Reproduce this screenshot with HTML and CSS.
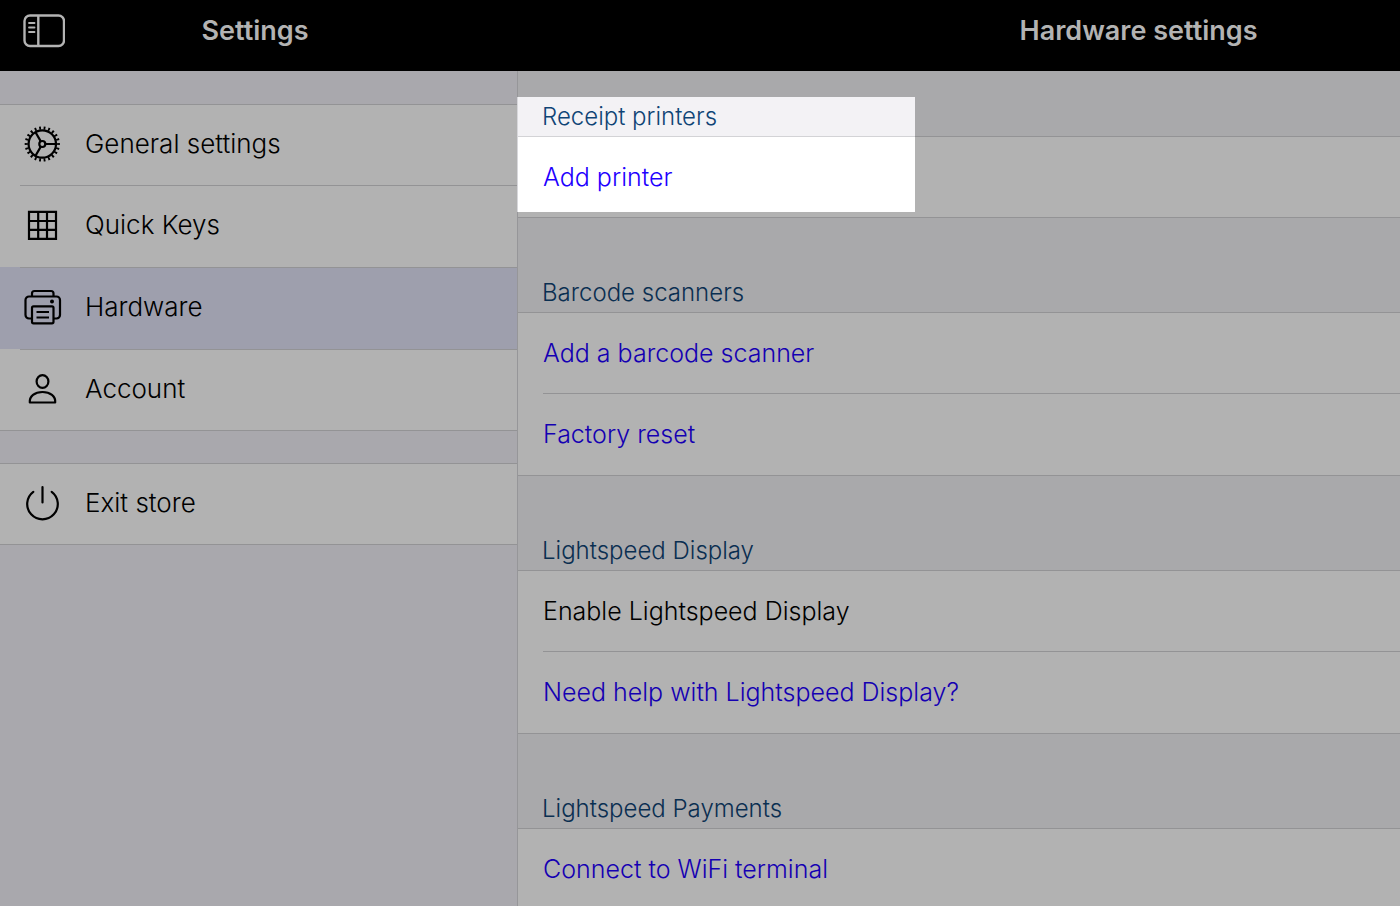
FILE: index.html
```
<!DOCTYPE html>
<html lang="en">
<head>
    <meta charset="utf-8">
    <meta name="viewport" content="width=device-width, initial-scale=1">
    <title>Hardware settings</title>
    <link rel="stylesheet" href="styles.css">
</head>
<body>
    <header class="navbar">
        <div class="navbar-side">
            <button class="toggle" type="button" aria-label="Toggle sidebar">
                <svg width="42" height="34" viewBox="0 0 42 34" fill="none" stroke="#b3b3b3" stroke-width="2.400">
                    <rect x="1.500" y="1.500" width="39.500" height="30.500" rx="5.500"/>
                    <path d="M15.300 1.500v30.500"/>
                    <path d="M6 9h5.500M6 13.500h5.500M6 18h5.500" stroke-width="1.800" stroke-linecap="round"/>
                </svg>
            </button>
            <h1 class="navbar-title">Settings</h1>
        </div>
        <h2 class="navbar-title navbar-main">Hardware settings</h2>
    </header>

    <div class="layout">
        <!-- Sidebar menu -->
        <nav class="sidebar">
            <div class="group">
                <a class="row menu-item" href="#general">
                    <svg class="icon" viewBox="0 0 40 40">
                        <circle cx="20.300" cy="20" r="13.700"/>
                        <circle cx="20.300" cy="20" r="16" stroke-width="3.200" pathLength="66" stroke-dasharray="1.200 1.800" stroke-dashoffset=".600"/>
                        <circle cx="20.300" cy="20" r="3"/>
                        <path d="M23.300 20H34M18.800 17.400L13.500 8.300M18.800 22.600l-5.300 9.100"/>
                    </svg>
                    General settings
                </a>
                <a class="row menu-item" href="#quick-keys">
                    <svg class="icon" viewBox="0 0 40 40">
                        <path d="M7 6.800h27v27h-27zM16.200 6.800v27M25 6.800v27M7 16h27M7 24.800h27"/>
                    </svg>
                    Quick Keys
                </a>
                <a class="row menu-item selected" href="#hardware" aria-current="page">
                    <svg class="icon" viewBox="0 0 40 40">
                        <path d="M10 9.300V6.500a2.500 2.500 0 0 1 2.500-2.500h16.500a2.500 2.500 0 0 1 2.500 2.500v2.800"/>
                        <path d="M9.500 31.500H7a3.500 3.500 0 0 1-3.500-3.500V13A3.500 3.500 0 0 1 7 9.500h27.500A3.500 3.500 0 0 1 38 13v15a3.500 3.500 0 0 1-3.500 3.500H32"/>
                        <rect x="10" y="19.300" width="21.500" height="17" rx="1.500"/>
                        <path d="M14.500 25h12.500M14.500 30.500h12.500" stroke-width="1.800"/>
                        <circle cx="30" cy="14.500" r="2" fill="#000" stroke="none"/>
                    </svg>
                    Hardware
                </a>
                <a class="row menu-item" href="#account">
                    <svg class="icon" viewBox="0 0 40 40">
                        <ellipse cx="20.500" cy="12.500" rx="5.900" ry="6.400"/>
                        <path d="M7.800 33.500c-.600-6.500 5-10.500 12.700-10.500s13.300 4 12.700 10.500z" stroke-linejoin="round"/>
                    </svg>
                    Account
                </a>
            </div>
            <div class="group">
                <a class="row menu-item" href="#exit">
                    <svg class="icon" viewBox="0 0 40 40">
                        <path d="M20.500 4v15.500M11.300 8.800a15.300 15.300 0 1 0 18.400 0" stroke-linecap="round"/>
                    </svg>
                    Exit store
                </a>
            </div>
        </nav>

        <!-- Hardware settings -->
        <main class="content">
            <section>
                <h3 class="section-title">Receipt printers</h3>
                <div class="group">
                    <div class="row"><a href="#add-printer">Add printer</a></div>
                </div>
            </section>
            <section>
                <h3 class="section-title">Barcode scanners</h3>
                <div class="group">
                    <div class="row"><a href="#add-scanner">Add a barcode scanner</a></div>
                    <div class="row"><a href="#factory-reset">Factory reset</a></div>
                </div>
            </section>
            <section>
                <h3 class="section-title">Lightspeed Display</h3>
                <div class="group">
                    <div class="row">Enable Lightspeed Display</div>
                    <div class="row"><a href="#display-help">Need help with Lightspeed Display?</a></div>
                </div>
            </section>
            <section>
                <h3 class="section-title">Lightspeed Payments</h3>
                <div class="group">
                    <div class="row"><a href="#wifi-terminal">Connect to WiFi terminal</a></div>
                </div>
            </section>
            <div class="spotlight"></div>
        </main>
    </div>
</body>
</html>
```
FILE: styles.css
```
* {
    box-sizing: border-box;
}
body {
    margin: 0;
    height: 100vh;
    display: flex;
    flex-direction: column;
    overflow: hidden;
    font-family: Inter, "Liberation Sans", sans-serif;
    font-size: 25px;
    font-weight: 300;
    line-height: 32px;
    color: #000;
}

/* Top bar, stays above the dimming */
.navbar {
    position: relative;
    z-index: 1;
    display: flex;
    flex: none;
    height: 71px;
    padding-bottom: 9px;
    background: #000;
    color: #b3b3b3;
}
.navbar-side {
    display: flex;
    align-items: center;
    width: 517px;
    padding-left: 23px;
}
.navbar-title {
    margin: 0;
    font-size: 27px;
    font-weight: 600;
}
.navbar-side .navbar-title {
    flex: 1;
    padding-right: 72px;
    text-align: center;
}
.navbar-main {
    flex: 1;
    align-self: center;
    padding-left: 360px;
    text-align: center;
    white-space: nowrap;
}
.toggle {
    display: flex;
    padding: 0;
    border: none;
    background: none;
    cursor: pointer;
}

.layout {
    display: flex;
    flex: 1;
    min-height: 0;
}
.sidebar {
    flex: none;
    width: 517px;
    background: #f2f1f8;
}
.sidebar .group {
    margin-top: 32px;
}
.sidebar .group:first-child {
    margin-top: 33px;
}
.content {
    position: relative;
    flex: 1;
    border-left: 1px solid #d7d7db;
    background: #f3f2f5;
}

/* Lists */
.group {
    border-top: 1px solid #d3d3d6;
    border-bottom: 1px solid #d3d3d6;
    background: #fff;
}
.row {
    display: flex;
    align-items: center;
    height: 80px;
    padding-left: 25px;
}
.row + .row {
    height: 82px;
    background-image: linear-gradient(#d3d3d6, #d3d3d6);
    background-repeat: no-repeat;
    background-position: 25px 0;
    background-size: 100% 1px;
}
.row a {
    color: #1e00ff;
    text-decoration: none;
}
.menu-item {
    gap: 23px;
    padding: 0 0 2px 22px;
    color: #000;
    font-size: 26px;
    text-decoration: none;
}
.menu-item + .menu-item {
    background-position: 20px 0;
}
.menu-item + .menu-item:last-child {
    height: 81px;
}
.menu-item.selected {
    background-color: #e3e4f8;
}
.icon {
    width: 40px;
    height: 40px;
    fill: none;
    stroke: #000;
    stroke-width: 2.2;
}

.section-title {
    display: flex;
    align-items: flex-end;
    height: 94px;
    margin: 0;
    padding: 0 0 3px 24px;
    color: #0f4475;
    font-size: 24px;
    font-weight: 300;
}
section:first-child .section-title {
    height: 65px;
}

/* Dims everything outside the highlighted area */
.spotlight {
    position: absolute;
    top: 26px;
    left: -1px;
    width: 398px;
    height: 115px;
    box-shadow: 0 0 0 9999px rgba(0, 0, 0, .3);
    pointer-events: none;
}
```
